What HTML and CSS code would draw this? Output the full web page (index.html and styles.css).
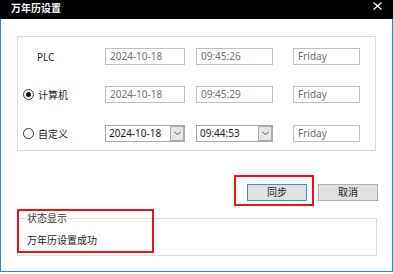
FILE: index.html
```html
<!DOCTYPE html>
<html lang="zh-CN">
<head>
  <meta charset="UTF-8">
  <title>万年历设置</title>
  <link rel="stylesheet" href="styles.css">
</head>
<body>
  <div class="window">
    <div class="titlebar">
      <span class="title">万年历设置</span>
      <svg class="close" width="9" height="8" viewBox="0 0 9 8">
        <path d="M0.5 0.5 L8.5 7.5 M8.5 0.5 L0.5 7.5" stroke="#fff" stroke-width="1.2" fill="none"/>
      </svg>
    </div>

    <div class="client">
      <div class="group clock-group">
        <div class="row-label plain">PLC</div>
        <div class="field date disabled">2024-10-18</div>
        <div class="field time disabled">09:45:26</div>
        <div class="field day disabled">Friday</div>

        <div class="row-label"><span class="radio checked"></span>计算机</div>
        <div class="field date disabled">2024-10-18</div>
        <div class="field time disabled">09:45:29</div>
        <div class="field day disabled">Friday</div>

        <div class="row-label"><span class="radio"></span>自定义</div>
        <div class="field date combo"><span class="combo-text">2024-10-18</span><span class="drop"><svg width="7" height="5" viewBox="0 0 7 5"><path d="M0.5 0.8 L3.5 3.8 L6.5 0.8" stroke="#444" fill="none"/></svg></span></div>
        <div class="field time combo"><span class="combo-text">09:44:53</span><span class="drop"><svg width="7" height="5" viewBox="0 0 7 5"><path d="M0.5 0.8 L3.5 3.8 L6.5 0.8" stroke="#444" fill="none"/></svg></span></div>
        <div class="field day disabled">Friday</div>
      </div>

      <div class="actions">
        <button class="btn default">同步</button>
        <button class="btn">取消</button>
      </div>

      <fieldset class="status">
        <legend>状态显示</legend>
        <div class="status-text">万年历设置成功</div>
      </fieldset>
    </div>

    <!-- annotation boxes drawn over the dialog -->
    <div class="mark mark-sync"></div>
    <div class="mark mark-status"></div>
  </div>
</body>
</html>
```

FILE: styles.css
```css
body, html {
  margin: 0;
  padding: 0;
  background: #fff;
}
.window {
  position: relative;
  width: 393px;
  height: 274px;
  font-family: "Noto Sans", "Noto Sans CJK SC", sans-serif;
  font-size: 10px;
  color: #1a1a1a;
}
.titlebar {
  display: flex;
  justify-content: space-between;
  align-items: center;
  height: 19px;
  padding: 0 11px;
  background: #000;
  box-sizing: border-box;
}
.title {
  color: #fff;
  font-weight: bold;
  font-size: 10px;
  line-height: 14px;
  margin-top: -3px;
}
.close {
  margin-top: -8px;
}
.client {
  height: 253px;
  box-sizing: border-box;
  border: 1px solid #2b86d6;
  border-top: none;
  padding-top: 17px;
}
.group {
  width: 359px;
  margin-left: 16px;
  box-sizing: border-box;
  border: 1px solid #dcdcdc;
}
.clock-group {
  display: grid;
  grid-template-columns: 87px 91px 97px 67px;
  grid-template-rows: 17px 18px 17px;
  row-gap: 21px;
  align-items: start;
  padding: 11px 0 8px 0;
}
.row-label {
  display: flex;
  align-items: center;
  height: 17px;
  padding-left: 5px;
  line-height: 16px;
}
.row-label.plain {
  padding-left: 19px;
}
.radio {
  width: 11px;
  height: 11px;
  box-sizing: border-box;
  border: 1px solid #333;
  border-radius: 50%;
  margin-right: 4px;
  display: flex;
  align-items: center;
  justify-content: center;
}
.radio.checked::after {
  content: "";
  width: 5px;
  height: 5px;
  border-radius: 50%;
  background: #111;
}
.field {
  height: 17px;
  box-sizing: border-box;
  border: 1px solid #bebebe;
  padding-left: 4px;
  line-height: 15px;
  white-space: nowrap;
}
.field.date { width: 80px; }
.field.time { width: 77px; }
.field.day { width: 67px; }
.field.disabled {
  color: #6e6e6e;
}
.field.combo {
  display: flex;
  border-color: #a8a8a8;
  padding-left: 3px;
}
.combo-text {
  flex: 1;
}
.drop {
  width: 14px;
  height: 15px;
  box-sizing: border-box;
  border: 1px solid #acacac;
  background: #e6e6e6;
  display: flex;
  align-items: center;
  justify-content: center;
}
.actions {
  display: flex;
  justify-content: flex-end;
  gap: 11px;
  margin-top: 33px;
  padding-right: 14px;
}
.btn {
  width: 60px;
  height: 17px;
  padding: 0;
  box-sizing: border-box;
  border: 1px solid #adadad;
  background: #e1e1e1;
  font-family: "Noto Sans", "Noto Sans CJK SC", sans-serif;
  font-size: 10px;
  line-height: 15px;
  color: #1a1a1a;
}
.btn.default {
  border-color: #3c8fd9;
}
.status {
  width: 360px;
  margin: 9px 0 0 16px;
  box-sizing: border-box;
  border: 1px solid #dcdcdc;
  padding: 0 9px 7px 9px;
}
.status legend {
  padding: 0 1px;
  margin-left: -1px;
  line-height: 16px;
  color: #333;
}
.status-text {
  padding-top: 6px;
  line-height: 16px;
}
.mark {
  position: absolute;
  box-sizing: border-box;
  border: 2px solid #e8121a;
}
.mark-sync {
  left: 234px;
  top: 175px;
  width: 80px;
  height: 31px;
}
.mark-status {
  left: 17px;
  top: 209px;
  width: 137px;
  height: 44px;
}
```
